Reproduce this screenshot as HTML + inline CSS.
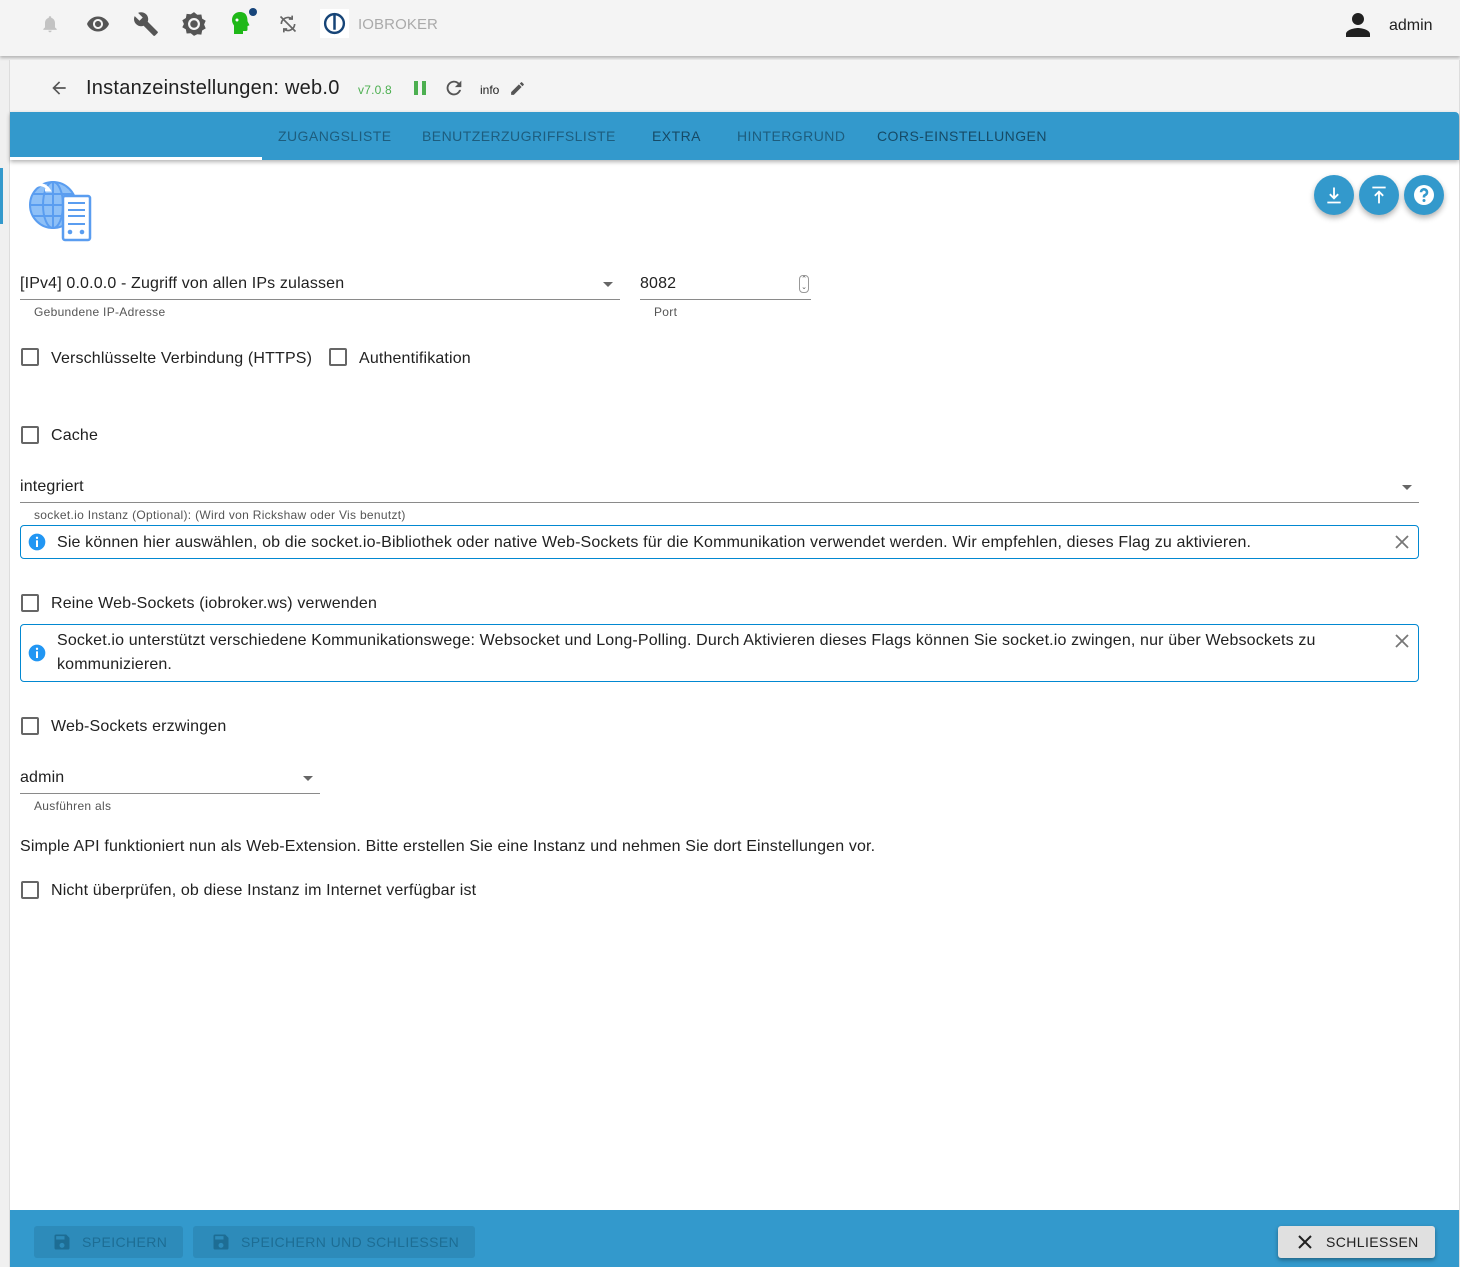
<!DOCTYPE html>
<html><head><meta charset="utf-8">
<style>
*{box-sizing:border-box;margin:0;padding:0}
body{width:1460px;height:1267px;overflow:hidden;background:#f0f0f0;font-family:"Liberation Sans",Arial,sans-serif;color:#212121;position:relative}
.a{position:absolute}
.top{left:0;top:0;width:1460px;height:56px;background:#f4f4f4;box-shadow:0 2px 3px rgba(0,0,0,.25)}
.panel{left:9px;top:60px;width:1451px;height:1207px;background:#fff;border-left:1px solid #ddd;border-right:1px solid #ddd}
.hdr{left:10px;top:60px;width:1449px;height:52px;background:#f4f4f4}
.tabs{left:10px;top:112px;width:1449px;height:48px;background:#3399cc;box-shadow:0 2px 4px rgba(0,0,0,.3);border-top-right-radius:4px}
.tab{top:128px;font-size:14px;letter-spacing:.45px;color:#1d5d7e}
.lbl{font-size:12px;color:#555;letter-spacing:.3px}
.t16{font-size:16px;color:#212121;letter-spacing:.15px}
.cb{width:18px;height:18px;border:2px solid #666;border-radius:2px}
.line{height:1px;background:#8a8a8a}
.alert{border:1px solid #0288d1;border-radius:4px}
.fab{width:40px;height:40px;border-radius:50%;background:#3399cc;box-shadow:0 3px 6px rgba(0,0,0,.3)}
.foot{left:10px;top:1210px;width:1449px;height:57px;background:#3399cc}
.btn{top:1226px;height:32px;background:#2d8bba;border-radius:3px;font-size:14px;color:#1d6d94;letter-spacing:.4px}
</style></head><body>
<div class="a top"></div>
<svg class="a" style="left:40px;top:14px" width="20" height="20" viewBox="0 0 24 24"><path fill="#c3c3c3" d="M12 22c1.1 0 2-.9 2-2h-4c0 1.1.9 2 2 2zm6-6v-5c0-3.1-1.6-5.6-4.5-6.3V4c0-.8-.7-1.5-1.5-1.5s-1.5.7-1.5 1.5v.7C7.6 5.4 6 7.9 6 11v5l-2 2v1h16v-1l-2-2z"/></svg>
<svg class="a" style="left:86px;top:12px" width="24" height="24" viewBox="0 0 24 24"><path fill="#555" d="M12 4.5C7 4.5 2.7 7.6 1 12c1.7 4.4 6 7.5 11 7.5s9.3-3.1 11-7.5c-1.7-4.4-6-7.5-11-7.5zM12 17c-2.8 0-5-2.2-5-5s2.2-5 5-5 5 2.2 5 5-2.2 5-5 5zm0-8c-1.700 0-3 1.3-3 3s1.3 3 3 3 3-1.3 3-3-1.3-3-3-3z"/></svg>
<svg class="a" style="left:133px;top:11px" width="26" height="26" viewBox="0 0 24 24"><path fill="#555" d="M22.7 19l-9.1-9.1c.9-2.3.4-5-1.5-6.9-2-2-5-2.4-7.4-1.3L9 6 6 9 1.6 4.7C.4 7.1.9 10.1 2.9 12.1c1.9 1.9 4.6 2.4 6.9 1.5l9.1 9.1c.4.4 1 .4 1.4 0l2.300-2.3c.5-.4.5-1.1.1-1.4z"/></svg>
<svg class="a" style="left:181px;top:11px" width="26" height="26" viewBox="0 0 24 24"><path fill="#555" d="M12 1l3 2.5 3.8-.3.7 3.8 3.3 2-1.5 3.5 1.5 3.5-3.3 2-.7 3.8-3.8-.3L12 23l-3-2.5-3.8.3-.7-3.8-3.3-2L2.7 12 1.2 8.5l3.3-2 .7-3.8 3.8.3z"/><circle cx="12" cy="12" r="5.5" fill="#f4f4f4"/><circle cx="12" cy="12" r="3.5" fill="#555"/></svg>
<svg class="a" style="left:230px;top:10px" width="22" height="26" viewBox="0 0 22 26"><path fill="#1fb818" d="M10 2c-5 0-8 3.5-8 8 0 2.5 1 4 2 5.5V24h9v-3h3c1 0 1.5-.6 1.5-1.5V16l2-.8-2-4C17.5 5 15 2 10 2z"/><circle cx="7" cy="10" r="1.5" fill="#fff"/></svg>
<div class="a" style="left:249px;top:8px;width:8px;height:8px;border-radius:50%;background:#17457a"></div>
<svg class="a" style="left:278px;top:14px" width="20" height="20" viewBox="0 0 24 24"><path fill="none" stroke="#666" stroke-width="2" d="M4 12a8 8 0 0 1 13-6M20 12a8 8 0 0 1-13 6M3 3l18 18M17 2v4h-4M7 22v-4h4"/></svg>
<div class="a" style="left:320px;top:9px;width:29px;height:29px;background:#fff"></div>
<svg class="a" style="left:322px;top:11px" width="25" height="25" viewBox="0 0 24 24"><circle cx="12" cy="12" r="9" fill="none" stroke="#164477" stroke-width="2.3"/><rect x="10.8" y="2" width="2.4" height="16" fill="#164477"/></svg>
<div class="a" style="left:358px;top:16px;font-size:15px;color:#aaa;letter-spacing:.1px">IOBROKER</div>
<svg class="a" style="left:1340px;top:7px" width="36" height="36" viewBox="0 0 24 24"><path fill="#212121" d="M12 12c2.2 0 4-1.8 4-4s-1.8-4-4-4-4 1.8-4 4 1.8 4 4 4zm0 2c-2.7 0-8 1.3-8 4v2h16v-2c0-2.7-5.3-4-8-4z"/></svg>
<div class="a" style="left:1389px;top:17px;font-size:16px;color:#212121">admin</div>

<div class="a panel"></div>
<div class="a" style="left:0;top:168px;width:3px;height:56px;background:#3399cc"></div>
<div class="a hdr"></div>
<svg class="a" style="left:49px;top:78px" width="20" height="20" viewBox="0 0 24 24"><path fill="#555" d="M20 11H7.8l5.6-5.6L12 4l-8 8 8 8 1.4-1.4L7.8 13H20z"/></svg>
<div class="a" style="left:86px;top:77px;font-size:20px;color:#212121;letter-spacing:.25px">Instanzeinstellungen: web.0</div>
<div class="a" style="left:358px;top:83px;font-size:12px;color:#4caf50;letter-spacing:.2px">v7.0.8</div>
<div class="a" style="left:414px;top:81px;width:4px;height:14px;background:#4caf50"></div>
<div class="a" style="left:422px;top:81px;width:4px;height:14px;background:#4caf50"></div>
<svg class="a" style="left:443px;top:77px" width="22" height="22" viewBox="0 0 24 24"><path fill="#555" d="M17.6 6.4A8 8 0 1 0 19.7 14h-2.1A6 6 0 1 1 12 6c1.7 0 3.1.7 4.2 1.8L13 11h7V4z"/></svg>
<div class="a" style="left:480px;top:83px;font-size:12px;color:#212121">info</div>
<svg class="a" style="left:509px;top:80px" width="17" height="17" viewBox="0 0 24 24"><path fill="#555" d="M3 17.2V21h3.8L17.8 9.9l-3.8-3.8zM20.7 7c.4-.4.4-1 0-1.4l-2.3-2.3c-.4-.4-1-.4-1.4 0l-1.8 1.8 3.8 3.8z"/></svg>

<div class="a tabs"></div>
<div class="a" style="left:10px;top:157px;width:252px;height:3px;background:#fff"></div>
<div class="a tab" style="left:278px">ZUGANGSLISTE</div>
<div class="a tab" style="left:422px">BENUTZERZUGRIFFSLISTE</div>
<div class="a tab" style="left:652px;color:#164a66">EXTRA</div>
<div class="a tab" style="left:737px">HINTERGRUND</div>
<div class="a tab" style="left:877px;color:#164a66">CORS-EINSTELLUNGEN</div>

<svg class="a" style="left:27px;top:178px" width="66" height="64" viewBox="0 0 66 64">
<circle cx="26" cy="27" r="23" fill="#8ec0f7" stroke="#5a9df0" stroke-width="2"/>
<ellipse cx="26" cy="27" rx="10" ry="23" fill="none" stroke="#5a9df0" stroke-width="2"/>
<path d="M3 27h46M26 4v46M6 16h40M6 38h40" stroke="#5a9df0" stroke-width="2"/>
<path d="M6 10c6-5 12-4 16 2l-4 0" fill="none" stroke="#fff" stroke-width="3"/>
<rect x="36" y="18" width="27" height="44" rx="2" fill="#fff" stroke="#5a9df0" stroke-width="2.5"/>
<path d="M41 25h17M41 32h17M41 38h17M41 46h17" stroke="#5a9df0" stroke-width="2"/>
<circle cx="43" cy="54" r="2.3" fill="#5a9df0"/><circle cx="55" cy="54" r="2.3" fill="#5a9df0"/>
</svg>

<div class="a fab" style="left:1314px;top:175px"></div>
<svg class="a" style="left:1324px;top:185px" width="20" height="20" viewBox="0 0 24 24"><path fill="none" stroke="#fff" stroke-width="2.2" d="M12 3v13M7 11l5 5 5-5M4 21h16"/></svg>
<div class="a fab" style="left:1359px;top:175px"></div>
<svg class="a" style="left:1369px;top:185px" width="20" height="20" viewBox="0 0 24 24"><path fill="none" stroke="#fff" stroke-width="2.2" d="M4 3h16M12 22V8M7 13l5-5 5 5"/></svg>
<div class="a fab" style="left:1404px;top:175px"></div>
<svg class="a" style="left:1412px;top:183px" width="24" height="24" viewBox="0 0 24 24"><circle cx="12" cy="12" r="10" fill="#fff"/><path fill="none" stroke="#3399cc" stroke-width="2.6" d="M9 9.3a3 3 0 1 1 4 2.8c-1 .4-1 1-1 2.4"/><circle cx="12" cy="17.5" r="1.5" fill="#3399cc"/></svg>

<div class="a t16" style="left:20px;top:275px">[IPv4] 0.0.0.0 - Zugriff von allen IPs zulassen</div>
<div class="a" style="left:603px;top:282px;width:0;height:0;border-left:5px solid transparent;border-right:5px solid transparent;border-top:5px solid #666"></div>
<div class="a line" style="left:20px;top:299px;width:600px"></div>
<div class="a lbl" style="left:34px;top:305px">Gebundene IP-Adresse</div>
<div class="a t16" style="left:640px;top:275px">8082</div>
<div class="a" style="left:799px;top:275px;width:10px;height:18px;border:1px solid #999;border-radius:4px;font-size:7px;line-height:8px;text-align:center;color:#555">⌃<br>⌄</div>
<div class="a line" style="left:640px;top:299px;width:171px"></div>
<div class="a lbl" style="left:654px;top:305px">Port</div>

<div class="a cb" style="left:21px;top:348px"></div>
<div class="a t16" style="left:51px;top:350px">Verschlüsselte Verbindung (HTTPS)</div>
<div class="a cb" style="left:329px;top:348px"></div>
<div class="a t16" style="left:359px;top:350px">Authentifikation</div>

<div class="a cb" style="left:21px;top:426px"></div>
<div class="a t16" style="left:51px;top:427px">Cache</div>

<div class="a t16" style="left:20px;top:478px">integriert</div>
<div class="a" style="left:1402px;top:485px;width:0;height:0;border-left:5px solid transparent;border-right:5px solid transparent;border-top:5px solid #666"></div>
<div class="a line" style="left:20px;top:502px;width:1399px"></div>
<div class="a lbl" style="left:34px;top:508px">socket.io Instanz (Optional): (Wird von Rickshaw oder Vis benutzt)</div>

<div class="a alert" style="left:20px;top:525px;width:1399px;height:34px"></div>
<svg class="a" style="left:27px;top:532px" width="20" height="20" viewBox="0 0 24 24"><circle cx="12" cy="12" r="10" fill="#2196f3"/><rect x="10.8" y="10" width="2.4" height="8" fill="#fff"/><circle cx="12" cy="7" r="1.4" fill="#fff"/></svg>
<div class="a t16" style="left:57px;top:534px">Sie können hier auswählen, ob die socket.io-Bibliothek oder native Web-Sockets für die Kommunikation verwendet werden. Wir empfehlen, dieses Flag zu aktivieren.</div>
<svg class="a" style="left:1394px;top:534px" width="16" height="16" viewBox="0 0 16 16"><path d="M2 2l12 12M14 2L2 14" stroke="#777" stroke-width="1.8"/></svg>

<div class="a cb" style="left:21px;top:594px"></div>
<div class="a t16" style="left:51px;top:595px">Reine Web-Sockets (iobroker.ws) verwenden</div>

<div class="a alert" style="left:20px;top:624px;width:1399px;height:58px"></div>
<svg class="a" style="left:27px;top:643px" width="20" height="20" viewBox="0 0 24 24"><circle cx="12" cy="12" r="10" fill="#2196f3"/><rect x="10.8" y="10" width="2.4" height="8" fill="#fff"/><circle cx="12" cy="7" r="1.4" fill="#fff"/></svg>
<div class="a t16" style="left:57px;top:629px;width:1300px;line-height:24px">Socket.io unterstützt verschiedene Kommunikationswege: Websocket und Long-Polling. Durch Aktivieren dieses Flags können Sie socket.io zwingen, nur über Websockets zu kommunizieren.</div>
<svg class="a" style="left:1394px;top:633px" width="16" height="16" viewBox="0 0 16 16"><path d="M2 2l12 12M14 2L2 14" stroke="#777" stroke-width="1.8"/></svg>

<div class="a cb" style="left:21px;top:717px"></div>
<div class="a t16" style="left:51px;top:718px">Web-Sockets erzwingen</div>

<div class="a t16" style="left:20px;top:769px">admin</div>
<div class="a" style="left:303px;top:776px;width:0;height:0;border-left:5px solid transparent;border-right:5px solid transparent;border-top:5px solid #666"></div>
<div class="a line" style="left:20px;top:793px;width:300px"></div>
<div class="a lbl" style="left:34px;top:799px">Ausführen als</div>

<div class="a t16" style="left:20px;top:838px">Simple API funktioniert nun als Web-Extension. Bitte erstellen Sie eine Instanz und nehmen Sie dort Einstellungen vor.</div>

<div class="a cb" style="left:21px;top:881px"></div>
<div class="a t16" style="left:51px;top:882px">Nicht überprüfen, ob diese Instanz im Internet verfügbar ist</div>

<div class="a foot"></div>
<div class="a btn" style="left:34px;width:149px"></div>
<svg class="a" style="left:52px;top:1232px" width="20" height="20" viewBox="0 0 24 24"><path fill="#1d6d94" d="M17 3H5a2 2 0 0 0-2 2v14a2 2 0 0 0 2 2h14a2 2 0 0 0 2-2V7zm-5 16a3 3 0 1 1 0-6 3 3 0 0 1 0 6zm3-10H5V5h10z"/></svg>
<div class="a" style="left:82px;top:1234px;font-size:14px;color:#1d6d94;letter-spacing:.4px">SPEICHERN</div>
<div class="a btn" style="left:193px;width:282px"></div>
<svg class="a" style="left:211px;top:1232px" width="20" height="20" viewBox="0 0 24 24"><path fill="#1d6d94" d="M17 3H5a2 2 0 0 0-2 2v14a2 2 0 0 0 2 2h14a2 2 0 0 0 2-2V7zm-5 16a3 3 0 1 1 0-6 3 3 0 0 1 0 6zm3-10H5V5h10z"/></svg>
<div class="a" style="left:241px;top:1234px;font-size:14px;color:#1d6d94;letter-spacing:.4px">SPEICHERN UND SCHLIESSEN</div>
<div class="a" style="left:1278px;top:1226px;width:157px;height:32px;background:#e0e0e0;border-radius:3px;box-shadow:0 2px 4px rgba(0,0,0,.35)"></div>
<svg class="a" style="left:1297px;top:1234px" width="16" height="16" viewBox="0 0 16 16"><path d="M2 2l12 12M14 2L2 14" stroke="#212121" stroke-width="2"/></svg>
<div class="a" style="left:1326px;top:1234px;font-size:14px;color:#212121;letter-spacing:.4px">SCHLIESSEN</div>
</body></html>
